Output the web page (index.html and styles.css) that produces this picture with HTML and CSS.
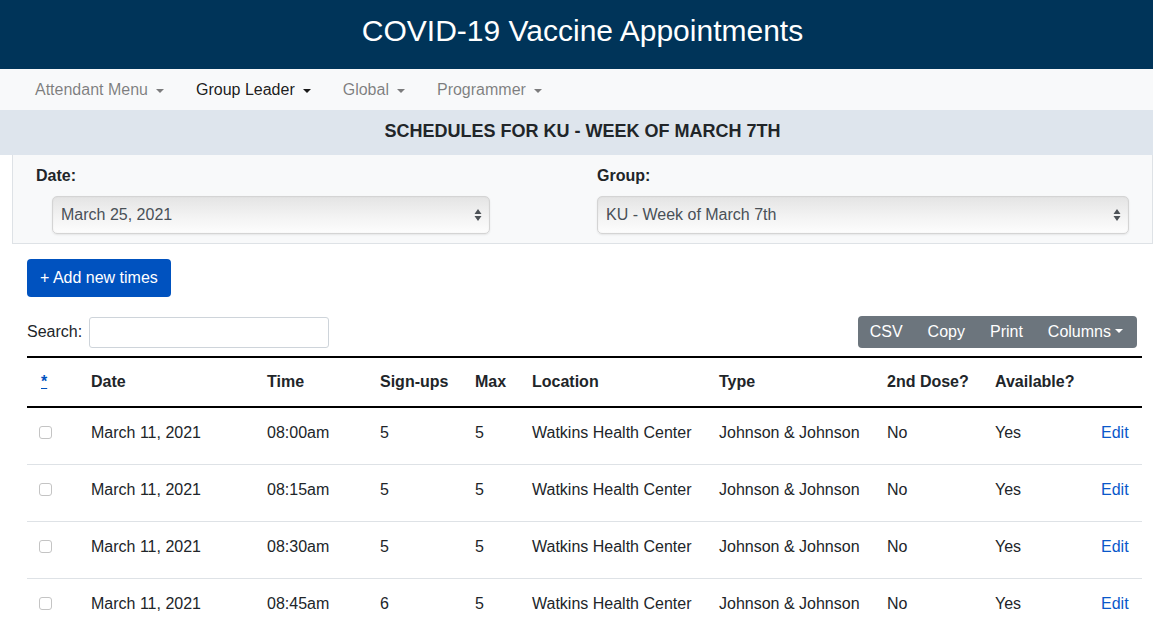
FILE: index.html
```html
<!DOCTYPE html>
<html>
<head>
<meta charset="utf-8">
<link rel="stylesheet" href="styles.css">
</head>
<body>
<header class="top">COVID-19 Vaccine Appointments</header>
<nav class="nav">
  <a class="nav-link">Attendant Menu<span class="caret"></span></a>
  <a class="nav-link active">Group Leader<span class="caret"></span></a>
  <a class="nav-link">Global<span class="caret"></span></a>
  <a class="nav-link">Programmer<span class="caret"></span></a>
</nav>
<div class="banner">SCHEDULES FOR KU - WEEK OF MARCH 7TH</div>
<section class="filters">
  <div class="field">
    <label class="label">Date:</label>
    <div class="select date-select">
      <span>March 25, 2021</span>
      <svg class="updown" width="8" height="14" viewBox="0 0 8 14"><path d="M4 1 L7.5 6 L0.5 6 Z M0.5 8 L7.5 8 L4 13 Z" fill="#4d5257"/></svg>
    </div>
  </div>
  <div class="field">
    <label class="label">Group:</label>
    <div class="select">
      <span>KU - Week of March 7th</span>
      <svg class="updown" width="8" height="14" viewBox="0 0 8 14"><path d="M4 1 L7.5 6 L0.5 6 Z M0.5 8 L7.5 8 L4 13 Z" fill="#4d5257"/></svg>
    </div>
  </div>
</section>
<main class="content">
  <button class="btn-add">+ Add new times</button>
  <div class="toolbar">
    <div class="search">Search: <input class="search-input" type="text"></div>
    <div class="btn-group">
      <span class="gbtn">CSV</span>
      <span class="gbtn">Copy</span>
      <span class="gbtn">Print</span>
      <span class="gbtn">Columns<span class="caret small"></span></span>
    </div>
  </div>
  <table class="table">
    <colgroup>
      <col style="width:52px"><col style="width:176px"><col style="width:113px"><col style="width:95px"><col style="width:57px"><col style="width:187px"><col style="width:168px"><col style="width:108px"><col style="width:106px"><col style="width:53px">
    </colgroup>
    <thead>
      <tr><th><a class="star">*</a></th><th>Date</th><th>Time</th><th>Sign-ups</th><th>Max</th><th>Location</th><th>Type</th><th>2nd Dose?</th><th>Available?</th><th></th></tr>
    </thead>
    <tbody>
      <tr><td><span class="cb"></span></td><td>March 11, 2021</td><td>08:00am</td><td>5</td><td>5</td><td>Watkins Health Center</td><td>Johnson &amp; Johnson</td><td>No</td><td>Yes</td><td><a class="edit">Edit</a></td></tr>
      <tr><td><span class="cb"></span></td><td>March 11, 2021</td><td>08:15am</td><td>5</td><td>5</td><td>Watkins Health Center</td><td>Johnson &amp; Johnson</td><td>No</td><td>Yes</td><td><a class="edit">Edit</a></td></tr>
      <tr><td><span class="cb"></span></td><td>March 11, 2021</td><td>08:30am</td><td>5</td><td>5</td><td>Watkins Health Center</td><td>Johnson &amp; Johnson</td><td>No</td><td>Yes</td><td><a class="edit">Edit</a></td></tr>
      <tr><td><span class="cb"></span></td><td>March 11, 2021</td><td>08:45am</td><td>6</td><td>5</td><td>Watkins Health Center</td><td>Johnson &amp; Johnson</td><td>No</td><td>Yes</td><td><a class="edit">Edit</a></td></tr>
    </tbody>
  </table>
</main>
</body>
</html>
```
FILE: styles.css
```css
* { box-sizing: border-box; }
html, body { margin: 0; padding: 0; }
body {
  font-family: "Liberation Sans", Arial, sans-serif;
  font-size: 16px;
  line-height: 24px;
  color: #212529;
  background: #fff;
}
.top {
  height: 69px;
  background: #003459;
  color: #fff;
  font-size: 30px;
  line-height: 62px;
  text-align: center;
  padding-left: 12px;
}
.nav {
  height: 41px;
  background: #f8f9fa;
  display: flex;
  align-items: center;
  padding-left: 19px;
}
.nav-link {
  color: rgba(0,0,0,0.5);
  padding: 0 16px;
  display: flex;
  align-items: center;
}
.nav-link.active { color: rgba(0,0,0,0.9); }
.caret {
  display: inline-block;
  width: 0; height: 0;
  margin-left: 8px;
  border-top: 4.8px solid currentColor;
  border-left: 4.8px solid transparent;
  border-right: 4.8px solid transparent;
  position: relative;
  top: 1px;
}
.caret.small { margin-left: 4px; border-top-width: 4px; border-left-width: 4px; border-right-width: 4px; top: -1px; }
.banner {
  height: 45px;
  background: #dee5ed;
  font-weight: bold;
  font-size: 18px;
  text-align: center;
  line-height: 42px;
  padding-left: 12px;
}
.filters {
  margin-left: 12px;
  height: 89px;
  background: #f8f9fa;
  border: 1px solid #dee2e6;
  border-top: none;
  display: grid;
  grid-template-columns: 1fr 1fr;
  column-gap: 29px;
  padding: 9px 23px 0 23px;
}
.label {
  display: block;
  font-weight: bold;
  margin-bottom: 8px;
}
.select {
  position: relative;
  height: 38px;
  border-radius: 5px;
  border: 1px solid #d4d4d4;
  background: linear-gradient(#e4e4e4, #f3f3f3 55%, #fdfdfd);
  box-shadow: 0 1px 2px rgba(0,0,0,0.08), inset 0 0 2px rgba(0,0,0,0.06);
  color: #495057;
  padding: 6px 8px;
  line-height: 24px;
}
.date-select { margin-left: 16px; width: 438px; }
.updown { position: absolute; right: 7px; top: 11px; }
.content { padding: 15px 11px 0 27px; }
.btn-add {
  font: inherit;
  color: #fff;
  background: #0052bf;
  border: none;
  border-radius: 4px;
  height: 38px;
  padding: 0 13px;
  line-height: 38px;
  display: block;
}
.toolbar {
  display: flex;
  justify-content: space-between;
  align-items: center;
  margin-top: 19px;
  height: 32px;
  padding-right: 5px;
}
.search { display: flex; align-items: center; }
.search-input {
  margin-left: 7px;
  width: 240px;
  height: 31px;
  border: 1px solid #ced4da;
  border-radius: 3px;
  background: #fff;
}
.btn-group {
  display: flex;
  background: #6c757d;
  border-radius: 4px;
  height: 32px;
  align-items: center;
  color: #fff;
  padding: 0 1.5px 0 0;
}
.gbtn { padding: 0 12.5px; display: flex; align-items: center; }
.gbtn:first-child { padding-left: 12px; }
.table {
  margin-top: 8px;
  width: 1115px;
  border-collapse: collapse;
  table-layout: fixed;
}
.table th, .table td {
  text-align: left;
  padding: 12px 0 12px 12px;
  white-space: nowrap;
  vertical-align: top;
}
.table thead tr { border-top: 2px solid #000; border-bottom: 2px solid #000; }
.table th { font-weight: bold; }
.table td { padding-top: 13px; padding-bottom: 19px; }
.table tbody tr { border-bottom: 1px solid #dee2e6; }
.star { color: #0052bf; text-decoration: underline; padding: 0 2px; }
.cb {
  display: inline-block;
  width: 13px; height: 13px;
  border: 1px solid #c4c4c4;
  border-radius: 3px;
  background: #fff;
  vertical-align: -1px;
}
.edit { color: #0a58ca; }
```
